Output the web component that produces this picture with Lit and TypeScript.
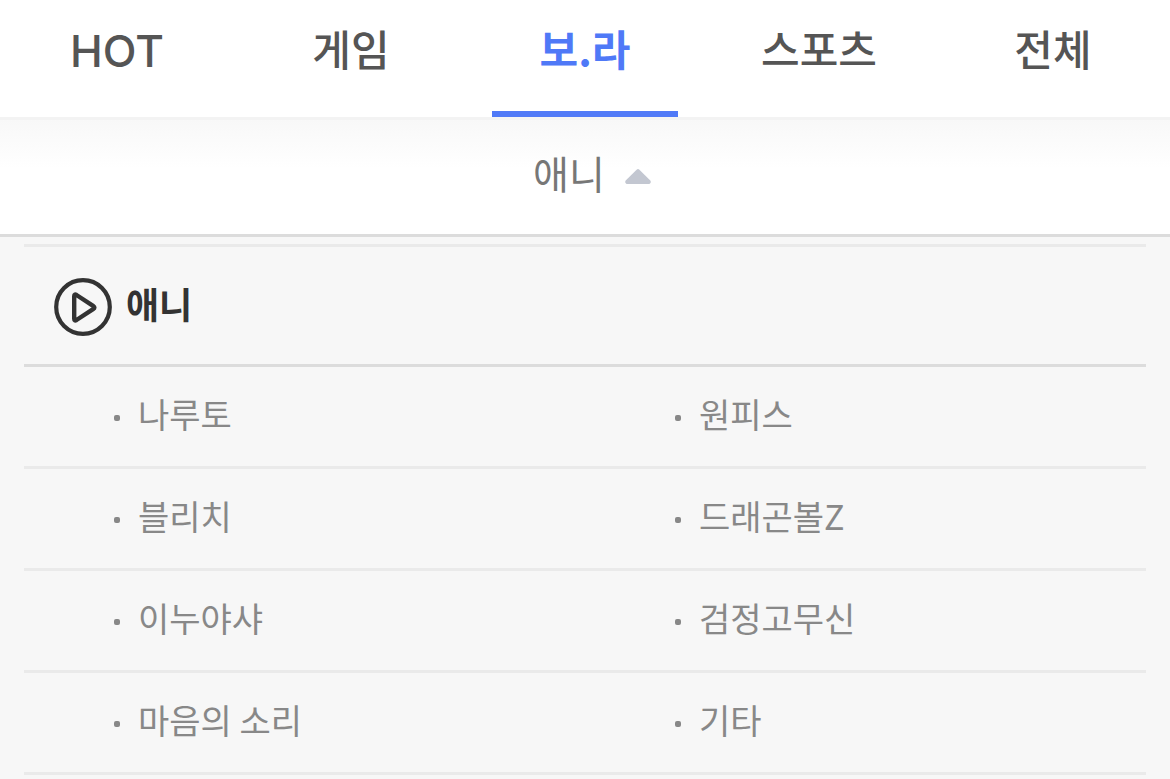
import { LitElement, html, css } from "lit";
import { customElement, state } from "lit/decorators.js";
import { classMap } from "lit/directives/class-map.js";

const TABS = ["HOT", "게임", "보.라", "스포츠", "전체"];

const ITEMS = [
  "나루토",
  "원피스",
  "블리치",
  "드래곤볼Z",
  "이누야샤",
  "검정고무신",
  "마음의 소리",
  "기타",
];

@customElement("category-tabs")
export class CategoryTabs extends LitElement {
  static styles = css`
    :host {
      display: block;
      background: #fff;
    }
    .tabs {
      display: grid;
      grid-template-columns: repeat(5, 1fr);
    }
    .tab {
      display: flex;
      justify-content: center;
      margin: 0 24px;
      padding: 18px 0 33px;
      border-bottom: 6px solid transparent;
      color: #555;
      font-size: 42px;
      font-weight: 500;
      line-height: 60px;
      white-space: nowrap;
      text-decoration: none;
    }
    .latin {
      padding: 21px 0 30px;
      font-family: "Inter", "Liberation Sans", sans-serif;
      font-size: 44px;
    }
    .active {
      border-bottom-color: #4f79f7;
      color: #4f79f7;
      font-weight: 700;
    }
  `;

  @state() private current = "보.라";

  render() {
    return html`<nav class="tabs">
      ${TABS.map(
        (tab) => html`<a
          class=${classMap({
            tab: true,
            active: tab === this.current,
            latin: /^[A-Z]+$/.test(tab),
          })}
          href="#"
          @click=${(e: Event) => {
            e.preventDefault();
            this.current = tab;
          }}
          >${tab}</a
        >`
      )}
    </nav>`;
  }
}

@customElement("category-panel")
export class CategoryPanel extends LitElement {
  static styles = css`
    :host {
      display: block;
      flex: 1;
      padding: 7px 24px 0;
      background: #f7f7f7;
    }
    .head {
      display: flex;
      align-items: center;
      gap: 14px;
      padding: 31px 30px 28px;
      border-top: 3px solid #eaeaea;
      border-bottom: 3px solid #dcdcdc;
    }
    .icon {
      display: block;
      width: 58px;
      height: 58px;
    }
    .title {
      margin: 0;
      padding-bottom: 8px;
      color: #333;
      font-size: 36px;
      font-weight: 700;
      line-height: 50px;
    }
    .list {
      display: grid;
      grid-template-columns: 1fr 1fr;
      margin: 0;
      padding: 0;
      list-style: none;
    }
    .cell {
      border-bottom: 3px solid #eaeaea;
    }
    .link {
      display: flex;
      align-items: center;
      gap: 18px;
      padding: 22px 0 27px 90px;
      color: #888;
      font-size: 34px;
      line-height: 50px;
      text-decoration: none;
    }
    .link::before {
      content: "";
      width: 6px;
      height: 6px;
      margin-top: 8px;
      border-radius: 2px;
      background: #888;
    }
  `;

  render() {
    return html`
      <header class="head">
        <svg class="icon" viewBox="0 0 58 58" fill="none" stroke="#333" aria-hidden="true">
          <circle cx="29" cy="29" r="26.8" stroke-width="4.2" />
          <path
            d="M20.2 18.2v22.6q0 2.6 2.3 1.2l16.6-10.8q2.6-1.7 0-3.4L22.5 17q-2.3-1.4-2.3 1.2z"
            stroke-width="4.4"
            stroke-linejoin="round"
          />
        </svg>
        <h2 class="title">애니</h2>
      </header>
      <ul class="list">
        ${ITEMS.map((item) => html`<li class="cell"><a class="link" href="#">${item}</a></li>`)}
      </ul>
    `;
  }
}

@customElement("app-root")
export class AppRoot extends LitElement {
  static styles = css`
    :host {
      display: flex;
      flex-direction: column;
      min-height: 100vh;
      font-family: "Noto Sans CJK KR", "Noto Sans", sans-serif;
    }
    .toggle {
      display: flex;
      justify-content: center;
      align-items: center;
      gap: 20px;
      width: 100%;
      margin: 0;
      padding: 25px 0 35px 14px;
      border: 0;
      border-top: 3px solid #f3f3f3;
      border-bottom: 3px solid #dcdcdc;
      background: linear-gradient(#f8f8f8, #fff 48px) padding-box;
      color: #777;
      font: inherit;
      font-size: 39px;
      line-height: 54px;
      cursor: pointer;
    }
    .arrow {
      display: block;
      width: 26px;
      height: 15px;
      margin-top: 8px;
    }
    .flipped {
      transform: rotate(180deg);
    }
  `;

  @state() private open = true;

  render() {
    return html`
      <category-tabs></category-tabs>
      <button
        class="toggle"
        type="button"
        aria-expanded=${this.open ? "true" : "false"}
        @click=${() => (this.open = !this.open)}
      >
        애니
        <svg
          class=${classMap({ arrow: true, flipped: !this.open })}
          viewBox="0 0 26 15"
          fill="#c3c7d1"
          aria-hidden="true"
        >
          <path d="M11.6.7q1.4-1.2 2.8 0L25.3 11.6q1.4 2.2-.9 3.4H1.6q-2.3-1.2-.9-3.4z" />
        </svg>
      </button>
      ${this.open ? html`<category-panel></category-panel>` : null}
    `;
  }
}
